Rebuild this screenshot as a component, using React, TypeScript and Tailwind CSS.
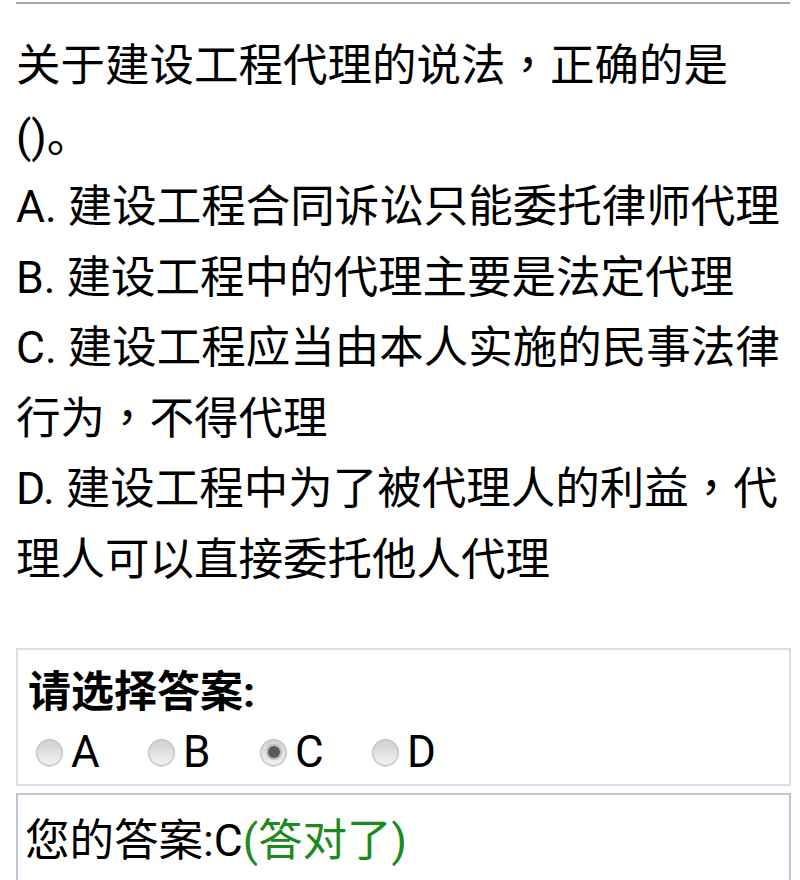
import React from 'react';

const font = { fontFamily: 'Roboto, "Noto Sans CJK SC", sans-serif' };

const options = ['A', 'B', 'C', 'D'];

// the reference sets the full-width comma centred in its cell
const Comma = () => <span className="inline-block font-['Noto_Sans_CJK_TC'] leading-none">，</span>;

function Radio({ checked }: { checked?: boolean }) {
  return (
    <span className="flex h-[27px] w-[27px] shrink-0 items-center justify-center rounded-full border border-[#b4b4b4] bg-linear-to-b from-[#cfcfcf] to-[#f2f2f2] shadow-[0_1px_1px_rgba(0,0,0,0.15)]">
      {checked && <span className="h-[12px] w-[12px] rounded-full bg-[#5a5a5a] ring-2 ring-[#bdbdbd]" />}
    </span>
  );
}

export default function App() {
  const selected = 'C';

  return (
    <div className="min-h-[880px] w-[800px] overflow-hidden bg-white text-black" style={font}>
      <div className="mx-4 mt-[2px] w-[774px] border-t-2 border-[#a8a8a8]" />

      <div className="mx-4 pt-[27px] text-[44.5px] leading-[70.5px] whitespace-nowrap">
        <div>关于建设工程代理的说法<Comma />正确的是<br />()。</div>
        <div>A. 建设工程合同诉讼只能委托律师代理</div>
        <div>B. 建设工程中的代理主要是法定代理</div>
        <div>C. 建设工程应当由本人实施的民事法律<br />行为<Comma />不得代理</div>
        <div>D. 建设工程中为了被代理人的利益<Comma />代<br />理人可以直接委托他人代理</div>
      </div>

      <div className="mx-4 mt-[53px] w-[775px] border-2 border-[#dedede] px-[10px] pt-[16px] pb-[2px]">
        <div className="text-[43px] font-bold leading-[52px]">请选择答案:</div>
        <div className="mt-[4px] flex h-[60px] items-center pl-[8px]">
          {options.map(o => (
            <label key={o} className="flex w-[112px] items-center gap-[8px] text-[44px]">
              <Radio checked={o === selected} />
              <span>{o}</span>
            </label>
          ))}
        </div>
      </div>

      <div className="mx-4 mt-[7px] w-[775px] border-2 border-[#bcc6d8] px-[7px] pt-[18px] pb-[40px] text-[44.5px] leading-[56px]">
        您的答案:{selected}<span className="text-[#1c8a1c]">(答对了)</span>
      </div>
    </div>
  );
}
